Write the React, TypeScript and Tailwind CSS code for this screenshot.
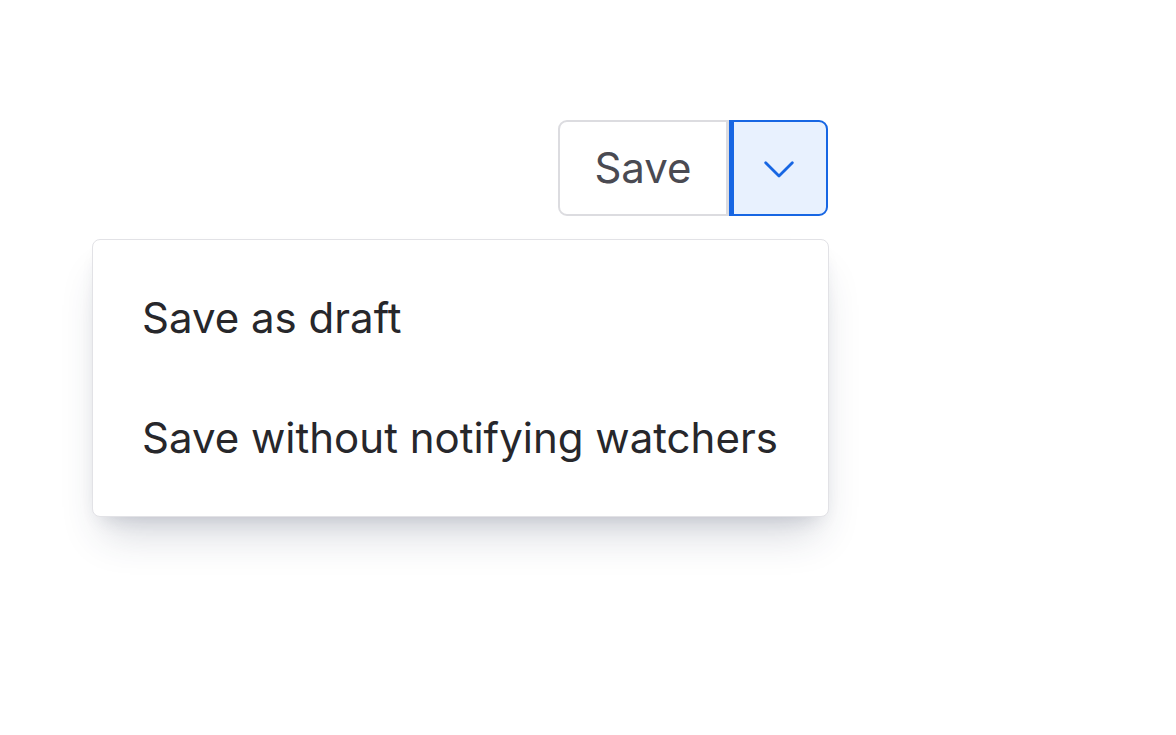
import React from "react";

const menuItems = ["Save as draft", "Save without notifying watchers"];

function ChevronDown() {
  return (
    <svg width="30" height="17" viewBox="0 0 30 17" fill="none">
      <path d="M1.7 1.7 L15 15 L28.3 1.7" stroke="#1766e3" strokeWidth="2.8" strokeLinecap="round" strokeLinejoin="round" />
    </svg>
  );
}

export default function App() {
  return (
    <div
      className="min-h-screen bg-white pt-[120px] pl-[92px]"
      style={{ fontFamily: "Inter, 'Noto Sans', sans-serif" }}
    >
      <div className="w-[737px] flex flex-col items-end gap-[23px]">
        <div className="flex mr-[1px]">
          <button
            type="button"
            className="w-[171px] h-[96px] border-[2.5px] border-r-[3px] border-[#dcdce0] rounded-l-[9px] bg-white text-[42px] text-[#4a4a52] leading-none flex items-center justify-center"
          >
            Save
          </button>
          <button
            type="button"
            className="w-[99px] h-[96px] border-[2.5px] border-l-[5px] border-[#1766e3] rounded-r-[9px] bg-[#e8f1fe] flex items-center justify-center pr-[3px] pt-[2px]"
          >
            <ChevronDown />
          </button>
        </div>
        <div className="w-[737px] border border-[#e2e2e6] rounded-[8px] bg-white py-[18px] shadow-[0_28px_40px_-12px_rgba(40,50,80,0.2),0_10px_18px_-10px_rgba(40,50,80,0.18)]">
          {menuItems.map((item) => (
            <div
              key={item}
              className="h-[120px] flex items-center pl-[49px] text-[42px] text-[#27272b] leading-none"
            >
              {item}
            </div>
          ))}
        </div>
      </div>
    </div>
  );
}
